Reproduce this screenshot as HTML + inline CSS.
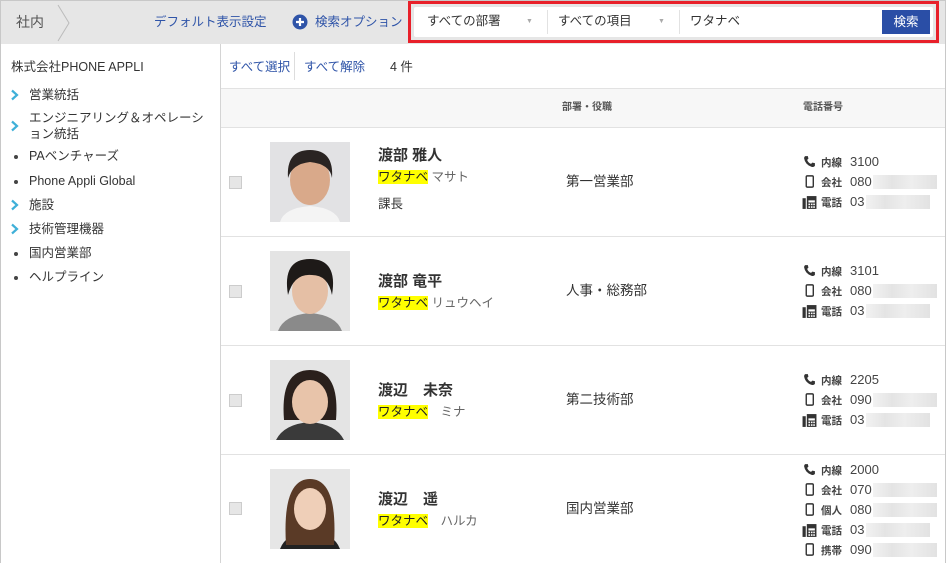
<!DOCTYPE html><html><head><meta charset="utf-8"><style>
*{margin:0;padding:0;box-sizing:border-box}
body{width:946px;height:563px;overflow:hidden;font-family:"Liberation Sans","Noto Sans CJK JP",sans-serif;color:#333;font-size:12.5px;background:#fff;position:relative}
.a{position:absolute;white-space:nowrap;line-height:16px}
.top{left:0;top:0;width:946px;height:44px;background:#e6e6e6;border:1px solid #c8c8c8;border-bottom:none}
.blue{color:#2f54a8}
.side{left:0;top:44px;width:221px;height:519px;border-left:1px solid #c8c8c8;border-right:1px solid #d4d4d4;background:#fff}
.main{left:221px;top:44px;width:725px;height:519px;border-right:1px solid #c8c8c8}
.dot{width:4px;height:4px;border-radius:2px;background:#444}
.hl{background:#ff0;color:#222}
.cb{width:13px;height:13px;background:#e6e6e6;border:1px solid #ccc}
.pl{font-size:10.5px;font-weight:bold;color:#444}
.num{font-size:13px;color:#444}
.blur{height:14px;background:linear-gradient(90deg,#f2f2f2,#e4e4e4 30%,#eee 60%,#e2e2e2)}
</style></head><body>
<svg width="0" height="0" style="position:absolute"><defs>
<symbol id="chev" viewBox="0 0 10 12"><path d="M2 1.5 L7 6 L2 10.5" fill="none" stroke="#3fb0d8" stroke-width="2.2"/></symbol>
<symbol id="tel" viewBox="0 0 12 12"><path d="M2 1 L4.5 1 L5 3.5 L3.8 4.5 Q5 7.5 7.5 8.2 L8.5 7 L11 7.5 L11 10 Q10 11.5 8 11 Q2 9 1 3 Q1 1.5 2 1Z" fill="#333"/></symbol>
<symbol id="mob" viewBox="0 0 12 12"><rect x="3" y="0.8" width="6.5" height="10.4" rx="1" fill="none" stroke="#333" stroke-width="1.3"/></symbol>
<symbol id="fax" viewBox="0 0 14 14"><rect x="0.5" y="3" width="3" height="10" fill="#333"/><rect x="4.5" y="1" width="9" height="12" fill="#333"/><g fill="#fff"><rect x="6" y="5" width="6" height="2"/><rect x="6" y="8" width="1.5" height="1.5"/><rect x="8.3" y="8" width="1.5" height="1.5"/><rect x="10.5" y="8" width="1.5" height="1.5"/><rect x="6" y="10.5" width="1.5" height="1.5"/><rect x="8.3" y="10.5" width="1.5" height="1.5"/><rect x="10.5" y="10.5" width="1.5" height="1.5"/></g></symbol>
</defs></svg>
<div class="a top"></div>
<div class="a" style="left:16px;top:14px;font-size:14px;color:#555">社内</div>
<svg class="a" style="left:56px;top:4px" width="16" height="38"><path d="M2 1 L13 19 L2 37" fill="none" stroke="#bbb" stroke-width="1"/></svg>
<div class="a blue" style="left:154px;top:14px">デフォルト表示設定</div>
<svg class="a" style="left:292px;top:14px" width="16" height="16"><circle cx="8" cy="8" r="7.5" fill="#2f54a8"/><path d="M8 4v8M4 8h8" stroke="#fff" stroke-width="2.2"/></svg>
<div class="a blue" style="left:315px;top:14px">検索オプション</div>
<div class="a" style="left:408px;top:1px;width:531px;height:42px;border:3px solid #e8202a;background:#e6e6e6"></div>
<div class="a" style="left:414px;top:7px;width:519px;height:30px;background:#fff;border-radius:2px"></div>
<div class="a" style="left:427px;top:13px">すべての部署</div>
<div class="a" style="left:526px;top:14px;font-size:7px;color:#aaa">▼</div>
<div class="a" style="left:547px;top:10px;width:1px;height:24px;background:#e2e2e2"></div>
<div class="a" style="left:558px;top:13px">すべての項目</div>
<div class="a" style="left:658px;top:14px;font-size:7px;color:#aaa">▼</div>
<div class="a" style="left:679px;top:10px;width:1px;height:24px;background:#e2e2e2"></div>
<div class="a" style="left:690px;top:13px">ワタナベ</div>
<div class="a" style="left:882px;top:10px;width:48px;height:24px;background:#2a4ea6;color:#fff;text-align:center;line-height:24px">検索</div>

<div class="a side"></div>
<div class="a" style="left:11px;top:59px">株式会社PHONE APPLI</div>
<svg class="a" style="left:10px;top:89px" width="10" height="12"><use href="#chev"/></svg><div class="a" style="left:29px;top:87px">営業統括</div>
<svg class="a" style="left:10px;top:120px" width="10" height="12"><use href="#chev"/></svg><div class="a" style="left:29px;top:110px;line-height:16px">エンジニアリング＆オペレーシ<br>ョン統括</div>
<div class="a dot" style="left:14px;top:155px"></div><div class="a" style="left:29px;top:148px">PAベンチャーズ</div>
<div class="a dot" style="left:14px;top:180px"></div><div class="a" style="left:29px;top:173px">Phone Appli Global</div>
<svg class="a" style="left:10px;top:199px" width="10" height="12"><use href="#chev"/></svg><div class="a" style="left:29px;top:197px">施設</div>
<svg class="a" style="left:10px;top:223px" width="10" height="12"><use href="#chev"/></svg><div class="a" style="left:29px;top:221px">技術管理機器</div>
<div class="a dot" style="left:14px;top:252px"></div><div class="a" style="left:29px;top:245px">国内営業部</div>
<div class="a dot" style="left:14px;top:276px"></div><div class="a" style="left:29px;top:269px">ヘルプライン</div>

<div class="a main"></div>
<div class="a blue" style="left:229px;top:59px">すべて選択</div>
<div class="a" style="left:294px;top:52px;width:1px;height:28px;background:#ddd"></div>
<div class="a blue" style="left:304px;top:59px">すべて解除</div>
<div class="a" style="left:390px;top:59px">4 件</div>
<div class="a" style="left:221px;top:88px;width:724px;height:40px;background:#f7f7f7;border-top:1px solid #e2e2e2;border-bottom:1px solid #e2e2e2"></div>
<div class="a" style="left:562px;top:100px;font-size:10px;font-weight:bold;color:#555">部署・役職</div>
<div class="a" style="left:803px;top:100px;font-size:10px;font-weight:bold;color:#555">電話番号</div>

<div class="a" style="left:221px;top:236px;width:724px;height:1px;background:#e2e2e2"></div>
<div class="a" style="left:221px;top:345px;width:724px;height:1px;background:#e2e2e2"></div>
<div class="a" style="left:221px;top:454px;width:724px;height:1px;background:#e2e2e2"></div>

<div class="a cb" style="left:229px;top:176px"></div>
<svg class="a" style="left:270px;top:142px" width="80" height="80"><rect width="80" height="80" fill="#e2e2e4"/><path d="M10 80 Q14 66 40 64 Q66 66 70 80Z" fill="#f4f4f4"/><ellipse cx="40" cy="38" rx="20" ry="25" fill="#d9a98a"/><path d="M18 36 Q16 8 40 8 Q64 8 62 36 Q60 22 40 20 Q22 22 18 36Z" fill="#2a2422"/></svg>
<div class="a" style="left:378px;top:148px;font-size:15px;font-weight:bold">渡部 雅人</div>
<div class="a" style="left:378px;top:169px"><span class="hl">ワタナベ</span> <span style="color:#666">マサト</span></div>
<div class="a" style="left:378px;top:196px">課長</div>
<div class="a" style="left:566px;top:174px;font-size:13.5px">第一営業部</div>

<div class="a cb" style="left:229px;top:285px"></div>
<svg class="a" style="left:270px;top:251px" width="80" height="80"><rect width="80" height="80" fill="#e4e4e4"/><path d="M8 80 Q14 64 40 62 Q66 64 72 80Z" fill="#8a8a8a"/><ellipse cx="40" cy="40" rx="18" ry="23" fill="#e5bfa5"/><path d="M18 44 Q12 8 40 8 Q68 8 62 44 Q58 24 42 24 Q24 22 18 44Z" fill="#1e1a18"/></svg>
<div class="a" style="left:378px;top:274px;font-size:15px;font-weight:bold">渡部 竜平</div>
<div class="a" style="left:378px;top:295px"><span class="hl">ワタナベ</span> <span style="color:#666">リュウヘイ</span></div>
<div class="a" style="left:566px;top:283px;font-size:13.5px">人事・総務部</div>

<div class="a cb" style="left:229px;top:394px"></div>
<svg class="a" style="left:270px;top:360px" width="80" height="80"><rect width="80" height="80" fill="#e4e4e4"/><path d="M6 80 Q14 64 40 62 Q66 64 74 80Z" fill="#3a3a3a"/><path d="M14 60 Q10 10 40 10 Q70 10 66 60Z" fill="#2a201c"/><ellipse cx="40" cy="42" rx="18" ry="22" fill="#e8c4aa"/></svg>
<div class="a" style="left:378px;top:383px;font-size:15px;font-weight:bold">渡辺　未奈</div>
<div class="a" style="left:378px;top:404px"><span class="hl">ワタナベ</span>　<span style="color:#666">ミナ</span></div>
<div class="a" style="left:566px;top:392px;font-size:13.5px">第二技術部</div>

<div class="a cb" style="left:229px;top:502px"></div>
<svg class="a" style="left:270px;top:469px" width="80" height="80"><rect width="80" height="80" fill="#e6e6e6"/><path d="M10 80 Q16 64 40 62 Q64 64 70 80Z" fill="#222"/><path d="M16 76 Q12 10 40 10 Q68 10 64 76Z" fill="#5a3a26"/><ellipse cx="40" cy="40" rx="16" ry="21" fill="#efcfb8"/></svg>
<div class="a" style="left:378px;top:492px;font-size:15px;font-weight:bold">渡辺　遥</div>
<div class="a" style="left:378px;top:513px"><span class="hl">ワタナベ</span>　<span style="color:#666">ハルカ</span></div>
<div class="a" style="left:566px;top:501px;font-size:13.5px">国内営業部</div>

<svg class="a" style="left:803px;top:155px" width="13" height="13"><use href="#tel"/></svg><div class="a pl" style="left:821px;top:155px">内線</div><div class="a num" style="left:850px;top:154px">3100</div>
<svg class="a" style="left:803px;top:175px" width="13" height="13"><use href="#mob"/></svg><div class="a pl" style="left:821px;top:175px">会社</div><div class="a num" style="left:850px;top:174px">080</div><div class="a blur" style="left:873px;top:175px;width:64px"></div>
<svg class="a" style="left:802px;top:195px" width="15" height="15"><use href="#fax"/></svg><div class="a pl" style="left:821px;top:195px">電話</div><div class="a num" style="left:850px;top:194px">03</div><div class="a blur" style="left:866px;top:195px;width:64px"></div>
<svg class="a" style="left:803px;top:264px" width="13" height="13"><use href="#tel"/></svg><div class="a pl" style="left:821px;top:264px">内線</div><div class="a num" style="left:850px;top:263px">3101</div>
<svg class="a" style="left:803px;top:284px" width="13" height="13"><use href="#mob"/></svg><div class="a pl" style="left:821px;top:284px">会社</div><div class="a num" style="left:850px;top:283px">080</div><div class="a blur" style="left:873px;top:284px;width:64px"></div>
<svg class="a" style="left:802px;top:304px" width="15" height="15"><use href="#fax"/></svg><div class="a pl" style="left:821px;top:304px">電話</div><div class="a num" style="left:850px;top:303px">03</div><div class="a blur" style="left:866px;top:304px;width:64px"></div>
<svg class="a" style="left:803px;top:373px" width="13" height="13"><use href="#tel"/></svg><div class="a pl" style="left:821px;top:373px">内線</div><div class="a num" style="left:850px;top:372px">2205</div>
<svg class="a" style="left:803px;top:393px" width="13" height="13"><use href="#mob"/></svg><div class="a pl" style="left:821px;top:393px">会社</div><div class="a num" style="left:850px;top:392px">090</div><div class="a blur" style="left:873px;top:393px;width:64px"></div>
<svg class="a" style="left:802px;top:413px" width="15" height="15"><use href="#fax"/></svg><div class="a pl" style="left:821px;top:413px">電話</div><div class="a num" style="left:850px;top:412px">03</div><div class="a blur" style="left:866px;top:413px;width:64px"></div>
<svg class="a" style="left:803px;top:463px" width="13" height="13"><use href="#tel"/></svg><div class="a pl" style="left:821px;top:463px">内線</div><div class="a num" style="left:850px;top:462px">2000</div>
<svg class="a" style="left:803px;top:483px" width="13" height="13"><use href="#mob"/></svg><div class="a pl" style="left:821px;top:483px">会社</div><div class="a num" style="left:850px;top:482px">070</div><div class="a blur" style="left:873px;top:483px;width:64px"></div>
<svg class="a" style="left:803px;top:503px" width="13" height="13"><use href="#mob"/></svg><div class="a pl" style="left:821px;top:503px">個人</div><div class="a num" style="left:850px;top:502px">080</div><div class="a blur" style="left:873px;top:503px;width:64px"></div>
<svg class="a" style="left:802px;top:523px" width="15" height="15"><use href="#fax"/></svg><div class="a pl" style="left:821px;top:523px">電話</div><div class="a num" style="left:850px;top:522px">03</div><div class="a blur" style="left:866px;top:523px;width:64px"></div>
<svg class="a" style="left:803px;top:543px" width="13" height="13"><use href="#mob"/></svg><div class="a pl" style="left:821px;top:543px">携帯</div><div class="a num" style="left:850px;top:542px">090</div><div class="a blur" style="left:873px;top:543px;width:64px"></div>
</body></html>
